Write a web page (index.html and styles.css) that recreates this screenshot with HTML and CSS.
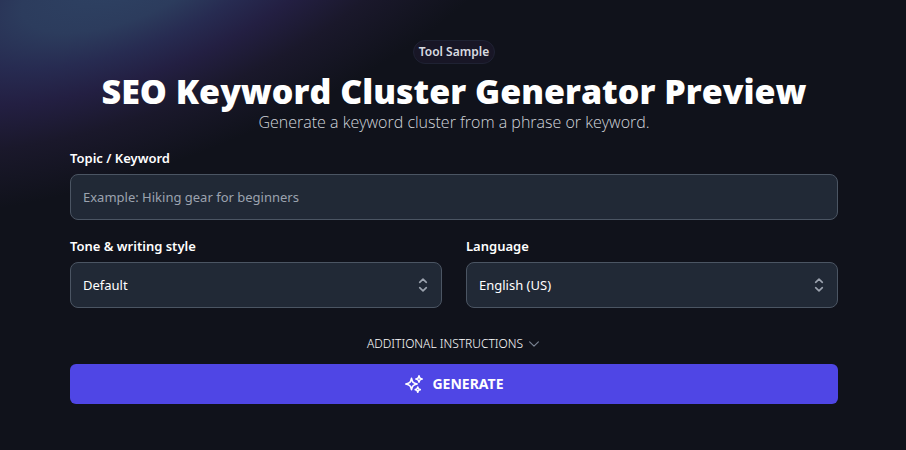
FILE: index.html
```html
<!DOCTYPE html>
<html lang="en">
<head>
    <meta charset="UTF-8">
    <meta name="viewport" content="width=device-width, initial-scale=1.0">
    <title>SEO Keyword Cluster Generator Preview</title>
    <link rel="stylesheet" href="styles.css">
</head>
<body>
    <main class="tool">
        <header class="tool-header">
            <span class="badge">Tool Sample</span>
            <h1>SEO Keyword Cluster Generator Preview</h1>
            <p class="subtitle">Generate a keyword cluster from a phrase or keyword.</p>
        </header>

        <form class="tool-form">
            <div class="field">
                <label for="topic">Topic / Keyword</label>
                <input type="text" id="topic" name="topic" class="control" placeholder="Example: Hiking gear for beginners">
            </div>

            <div class="field-row">
                <div class="field">
                    <label for="tone">Tone &amp; writing style</label>
                    <div class="select-wrap">
                        <select id="tone" name="tone" class="control">
                            <option>Default</option>
                        </select>
                        <svg class="select-icon" viewBox="0 0 24 24" aria-hidden="true">
                            <path d="M8 15.25 12 19l4-3.75m-8-6.5L12 5l4 3.75"/>
                        </svg>
                    </div>
                </div>
                <div class="field">
                    <label for="language">Language</label>
                    <div class="select-wrap">
                        <select id="language" name="language" class="control">
                            <option>English (US)</option>
                        </select>
                        <svg class="select-icon" viewBox="0 0 24 24" aria-hidden="true">
                            <path d="M8 15.25 12 19l4-3.75m-8-6.5L12 5l4 3.75"/>
                        </svg>
                    </div>
                </div>
            </div>

            <button type="button" class="more-button">
                Additional instructions
                <svg class="more-icon" viewBox="0 0 24 24" aria-hidden="true">
                    <path d="m19.5 8.25-7.5 7.5-7.5-7.5"/>
                </svg>
            </button>

            <button type="submit" class="generate-button">
                <svg class="generate-icon" viewBox="0 0 24 24" aria-hidden="true">
                    <path d="M9.813 15.904 9 18.75l-.813-2.846a4.5 4.5 0 0 0-3.09-3.09L2.25 12l2.846-.813a4.5 4.5 0 0 0 3.09-3.09L9 5.25l.813 2.846a4.5 4.5 0 0 0 3.09 3.09L15.75 12l-2.846.813a4.5 4.5 0 0 0-3.09 3.09ZM18.259 8.715 18 9.75l-.259-1.035a3.375 3.375 0 0 0-2.455-2.456L14.25 6l1.036-.259a3.375 3.375 0 0 0 2.455-2.456L18 2.25l.259 1.035a3.375 3.375 0 0 0 2.456 2.456L21.75 6l-1.035.259a3.375 3.375 0 0 0-2.456 2.456ZM16.894 20.567 16.5 21.75l-.394-1.183a2.25 2.25 0 0 0-1.423-1.423L13.5 18.75l1.183-.394a2.25 2.25 0 0 0 1.423-1.423l.394-1.183.394 1.183a2.25 2.25 0 0 0 1.423 1.423l1.183.394-1.183.394a2.25 2.25 0 0 0-1.423 1.423Z"/>
                </svg>
                Generate
            </button>
        </form>
    </main>
</body>
</html>
```
FILE: styles.css
```css
* {
    margin: 0;
    padding: 0;
    box-sizing: border-box;
}

body {
    min-height: 100vh;
    padding: 40px 68px 40px 70px;
    font-family: "Segoe UI", "Noto Sans", sans-serif;
    font-size: 13px;
    line-height: 20px;
    color: #fff;
    background-color: #10121b;
}

/* Glow in the top left corner */
body::before {
    content: "";
    position: absolute;
    top: -210px;
    left: -350px;
    z-index: -1;
    width: 940px;
    height: 380px;
    background: radial-gradient(closest-side, #2e4263 0%, #2c3c5d 22%, #272b51 37%, #231f42 52%, #1a182b 72%, #10121b 100%);
    transform: rotate(-20deg);
}

.tool {
    max-width: 768px;
    margin: 0 auto;
}

.tool-header {
    display: flex;
    flex-direction: column;
    align-items: center;
    text-align: center;
    margin-bottom: 16px;
}

.badge {
    padding: 1px 5px;
    border: 1px solid #1f2233;
    border-radius: 12px;
    background-color: #181626;
    color: #d9dbe0;
    font-size: 12px;
    font-weight: 600;
}

h1 {
    margin-top: 6px;
    font-family: "Segoe UI", "Open Sans", sans-serif;
    font-size: 34px;
    font-weight: 800;
    line-height: 42px;
}

.subtitle {
    color: #d1d5db;
    font-family: "Segoe UI", "Open Sans", sans-serif;
    font-size: 16px;
    font-weight: 300;
}

.tool-form {
    display: flex;
    flex-direction: column;
    gap: 16px;
}

.field label {
    display: block;
    margin-bottom: 6px;
    font-weight: 600;
}

.field-row {
    display: grid;
    grid-template-columns: 1fr 1fr;
    gap: 24px;
}

.control {
    display: block;
    width: 100%;
    height: 46px;
    padding: 0 12px;
    border: 1px solid #4b5563;
    border-radius: 8px;
    background-color: #212936;
    color: #fff;
    font: inherit;
    appearance: none;
}

.control::placeholder {
    color: #9ca3af;
    opacity: 1;
}

.select-wrap {
    position: relative;
}

.select-icon,
.more-icon,
.generate-icon {
    fill: none;
    stroke: currentColor;
    stroke-width: 2;
    stroke-linecap: round;
    stroke-linejoin: round;
}

.select-icon {
    position: absolute;
    top: 13px;
    right: 9px;
    width: 20px;
    height: 20px;
    color: #9ca3af;
    pointer-events: none;
}

button {
    border: none;
    color: #fff;
    font: inherit;
    text-transform: uppercase;
    cursor: pointer;
}

.more-button {
    display: flex;
    align-items: center;
    align-self: center;
    gap: 4px;
    margin-top: 10px;
    background: none;
    font-size: 12px;
    font-weight: 300;
}

.more-icon {
    width: 14px;
    height: 14px;
    color: #7b8494;
}

.generate-button {
    display: flex;
    align-items: center;
    justify-content: center;
    gap: 8px;
    height: 40px;
    margin-top: -6px;
    border-radius: 6px;
    background-color: #4f46e5;
    font-size: 14px;
    font-weight: 700;
}

.generate-icon {
    width: 20px;
    height: 20px;
}
```
